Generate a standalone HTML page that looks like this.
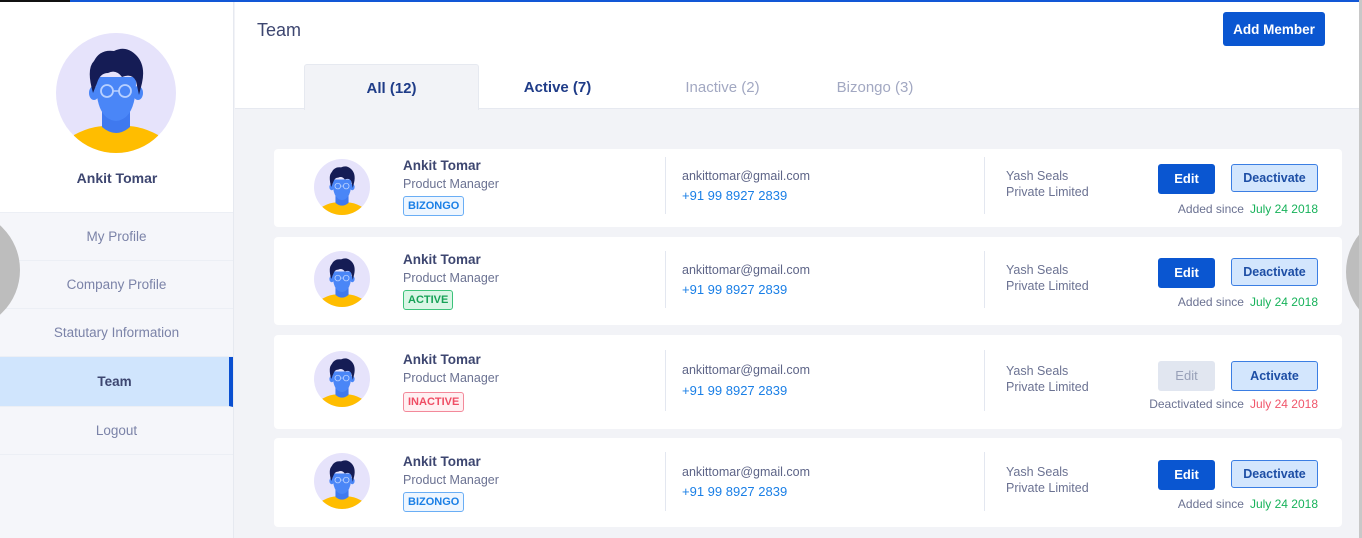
<!DOCTYPE html>
<html><head><meta charset="utf-8"><style>
*{box-sizing:border-box;margin:0;padding:0}
body{width:1362px;height:538px;overflow:hidden;background:#f2f3f7;font-family:"Liberation Sans",sans-serif;position:relative;color:#3d4670}
.topbar{position:absolute;left:0;top:0;width:1362px;height:2px;background:#1257d6}
.topbar:before{content:"";position:absolute;left:0;top:0;width:70px;height:2px;background:#111}
.side{position:absolute;left:0;top:2px;width:234px;height:536px;background:#f5f6fa;border-right:1px solid #e6e9f0}
.prof{height:211px;background:#fff;border-bottom:1px solid #eceff5;text-align:center}
.prof .name{position:absolute;top:168px;left:0;width:234px;font-size:14px;font-weight:bold;color:#3d4670}
.nav div{height:48px;line-height:48px;text-align:center;font-size:13.5px;color:#7b83a8;border-bottom:1px solid #eceff5}
.nav .act{background:#d0e5fd;color:#3d4670;font-weight:bold;border-right:4px solid #0a4fd0;height:50px;line-height:50px}
.head{position:absolute;left:235px;top:2px;width:1124px;height:107px;background:#fff;border-bottom:1px solid #e6e9f0}
.title{position:absolute;left:22px;top:18px;font-size:18px;color:#3d4670}
.add{position:absolute;left:988px;top:10px;width:102px;height:34px;background:#0a56d1;border-radius:3px;color:#fff;font-size:13.5px;font-weight:bold;text-align:center;line-height:35px}
.tab{position:absolute;top:62px;height:46px;line-height:48px;text-align:center;font-size:15px;font-weight:bold}
.card{position:absolute;left:274px;width:1068px;background:#fff;border-radius:4px}
.av{position:absolute;left:40px;width:56px;height:56px}
.nm{position:absolute;left:129px;font-size:13.5px;font-weight:bold;color:#3d4670}
.role{position:absolute;left:129px;font-size:12.5px;color:#6b7292}
.badge{position:absolute;left:129px;height:20px;line-height:18px;padding:0 4px;font-size:11px;font-weight:bold;border:1px solid;border-radius:3px}
.vl{position:absolute;width:1px;background:#e3e7f0}
.em{position:absolute;left:408px;font-size:12.5px;color:#5d6487}
.ph{position:absolute;left:408px;font-size:13px;color:#1a7fe6}
.co{position:absolute;left:732px;font-size:12.5px;color:#6b7292;line-height:16px}
.edit{position:absolute;left:884px;width:57px;height:30px;background:#0a56d1;border-radius:3px;color:#fff;font-size:13px;font-weight:bold;text-align:center;line-height:30px}
.deact{position:absolute;left:957px;width:87px;height:28px;background:#d3e6fd;border:1px solid #3b7ee3;border-radius:3px;color:#1d4ea5;font-size:12.5px;font-weight:bold;text-align:center;line-height:26px}
.since{position:absolute;right:24px;font-size:12px;color:#6b7292}
.since b{font-weight:normal;color:#17b25a;margin-left:6px}
</style></head><body>
<svg width="0" height="0" style="position:absolute"><defs>
<clipPath id="c"><circle cx="60" cy="60" r="60"/></clipPath>
<symbol id="a" viewBox="0 0 120 120">
<g clip-path="url(#c)">
<rect width="120" height="120" fill="#e6e3fb"/>
<path d="M0 120 L12 118 L18 102 Q40 90 60 94 Q80 90 102 102 L108 118 L120 120Z" fill="#ffbd00"/>
<path d="M46 72 L46 94 Q60 106 74 94 L74 72Z" fill="#3f79ef"/>
<ellipse cx="38" cy="60" rx="5" ry="7" fill="#4a86f7"/><ellipse cx="82" cy="60" rx="5" ry="7" fill="#4a86f7"/>
<path d="M40 44 Q39 86 60 88 Q81 86 80 44 Z" fill="#4a86f7"/>
<path d="M37 60 Q30 36 38 28 Q44 16 58 18 Q70 12 80 22 Q90 32 86 50 L83 62 L80 48 Q76 40 66 44 Q60 36 52 40 Q44 40 41 50 Z" fill="#151c55"/>
<circle cx="51" cy="58" r="6" fill="none" stroke="#b8d0ff" stroke-width="1.8"/><circle cx="69" cy="58" r="6" fill="none" stroke="#b8d0ff" stroke-width="1.8"/>
<path d="M57 58 H63" stroke="#b8d0ff" stroke-width="1.5"/>
</g></symbol></defs></svg>
<div class="topbar"></div>
<div class="side">
<div class="prof"><svg style="position:absolute;left:56px;top:31px" width="120" height="120"><use href="#a"/></svg><div class="name">Ankit Tomar</div></div>
<div class="nav"><div>My Profile</div><div>Company Profile</div><div>Statutary Information</div><div class="act">Team</div><div>Logout</div></div>
</div>
<div style="position:absolute;left:-100px;top:210px;width:120px;height:120px;border-radius:50%;background:#bdbdbd"></div>
<div class="head">
<div class="title">Team</div>
<div class="add">Add Member</div>
<div class="tab" style="left:69px;width:175px;background:#f2f3f7;border:1px solid #e6e9f0;border-bottom:none;border-radius:3px 3px 0 0;color:#1f3c88">All (12)</div>
<div class="tab" style="left:250px;width:145px;color:#1f3c88">Active (7)</div>
<div class="tab" style="left:415px;width:145px;color:#a2a8c2;font-weight:normal">Inactive (2)</div>
<div class="tab" style="left:565px;width:150px;color:#a2a8c2;font-weight:normal">Bizongo (3)</div>
</div>

<div class="card" style="top:149px;height:78px">
<svg class="av" style="top:10px"><use href="#a"/></svg>
<div class="nm" style="top:9px">Ankit Tomar</div><div class="role" style="top:28px">Product Manager</div>
<div class="badge" style="top:47px;color:#1a7fe6;border-color:#6aaef5;background:#eef6ff">BIZONGO</div>
<div class="vl" style="left:391px;top:8px;height:57px"></div>
<div class="em" style="top:20px">ankittomar@gmail.com</div><div class="ph" style="top:39px">+91 99 8927 2839</div>
<div class="vl" style="left:710px;top:8px;height:57px"></div>
<div class="co" style="top:19px">Yash Seals<br>Private Limited</div>
<div class="edit" style="top:15px">Edit</div><div class="deact" style="top:15px">Deactivate</div>
<div class="since" style="top:53px">Added since<b>July 24 2018</b></div>
</div>

<div class="card" style="top:237px;height:88px">
<svg class="av" style="top:14px"><use href="#a"/></svg>
<div class="nm" style="top:15px">Ankit Tomar</div><div class="role" style="top:34px">Product Manager</div>
<div class="badge" style="top:53px;color:#17a257;border-color:#3cc27a;background:#dbf6e6">ACTIVE</div>
<div class="vl" style="left:391px;top:14px;height:57px"></div>
<div class="em" style="top:26px">ankittomar@gmail.com</div><div class="ph" style="top:45px">+91 99 8927 2839</div>
<div class="vl" style="left:710px;top:14px;height:57px"></div>
<div class="co" style="top:25px">Yash Seals<br>Private Limited</div>
<div class="edit" style="top:21px">Edit</div><div class="deact" style="top:21px">Deactivate</div>
<div class="since" style="top:58px">Added since<b>July 24 2018</b></div>
</div>

<div class="card" style="top:335px;height:94px">
<svg class="av" style="top:16px"><use href="#a"/></svg>
<div class="nm" style="top:17px">Ankit Tomar</div><div class="role" style="top:36px">Product Manager</div>
<div class="badge" style="top:57px;color:#ef4d64;border-color:#f3899a;background:#fff0f2">INACTIVE</div>
<div class="vl" style="left:391px;top:15px;height:61px"></div>
<div class="em" style="top:28px">ankittomar@gmail.com</div><div class="ph" style="top:48px">+91 99 8927 2839</div>
<div class="vl" style="left:710px;top:15px;height:61px"></div>
<div class="co" style="top:28px">Yash Seals<br>Private Limited</div>
<div class="edit" style="top:26px;background:#e1e6f0;color:#98a0b8;font-weight:normal">Edit</div><div class="deact" style="top:26px;height:30px;line-height:28px">Activate</div>
<div class="since" style="top:62px">Deactivated since<b style="color:#f0566b">July 24 2018</b></div>
</div>

<div class="card" style="top:438px;height:89px">
<svg class="av" style="top:15px"><use href="#a"/></svg>
<div class="nm" style="top:16px">Ankit Tomar</div><div class="role" style="top:35px">Product Manager</div>
<div class="badge" style="top:54px;color:#1a7fe6;border-color:#6aaef5;background:#eef6ff">BIZONGO</div>
<div class="vl" style="left:391px;top:14px;height:59px"></div>
<div class="em" style="top:27px">ankittomar@gmail.com</div><div class="ph" style="top:46px">+91 99 8927 2839</div>
<div class="vl" style="left:710px;top:14px;height:59px"></div>
<div class="co" style="top:26px">Yash Seals<br>Private Limited</div>
<div class="edit" style="top:22px">Edit</div><div class="deact" style="top:22px">Deactivate</div>
<div class="since" style="top:59px">Added since<b>July 24 2018</b></div>
</div>

<div style="position:absolute;left:1346px;top:212px;width:120px;height:120px;border-radius:50%;background:#bdbdbd"></div>
<div style="position:absolute;left:1359px;top:0;width:3px;height:538px;background:#c8c8c8"></div>
</body></html>
